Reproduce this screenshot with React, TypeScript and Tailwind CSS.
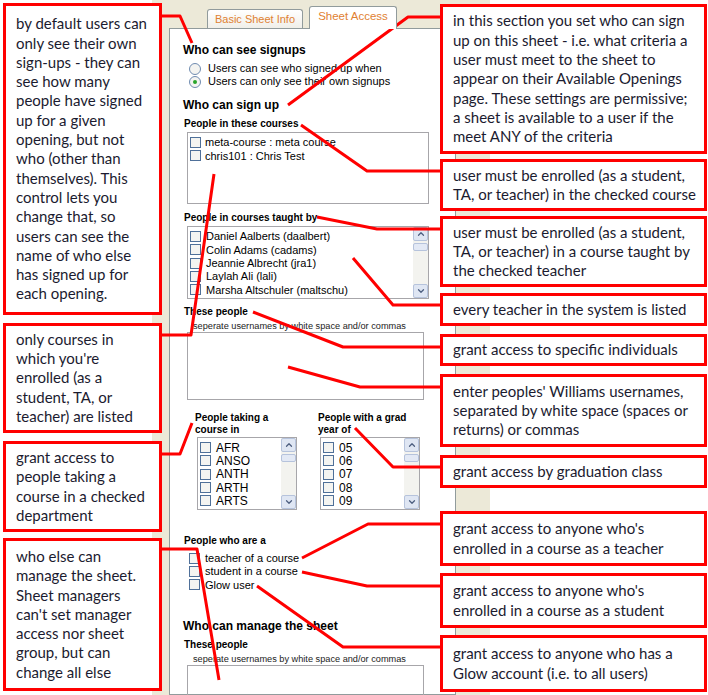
import { ChevronDown, ChevronUp } from "lucide-react";

interface Callout {
  cls: string;
  lines: string[];
}

const leftNotes: Callout[] = [
  {
    cls: "h-[312px]",
    lines: [
      "by default users can",
      "only see their own",
      "sign-ups - they can",
      "see how many",
      "people have signed",
      "up for a given",
      "opening, but not",
      "who (other than",
      "themselves). This",
      "control lets you",
      "change that, so",
      "users can see the",
      "name of who else",
      "has signed up for",
      "each opening.",
    ],
  },
  {
    cls: "mt-[8px] h-[110px]",
    lines: ["only courses in", "which you're", "enrolled (as a", "student, TA, or", "teacher) are listed"],
  },
  {
    cls: "mt-[8px] h-[91px]",
    lines: ["grant access to", "people taking a", "course in a checked", "department"],
  },
  {
    cls: "mt-[6px] h-[153px]",
    lines: [
      "who else can",
      "manage the sheet.",
      "Sheet managers",
      "can't set manager",
      "access nor sheet",
      "group, but can",
      "change all else",
    ],
  },
];

const rightNotes: Callout[] = [
  {
    cls: "h-[150px]",
    lines: [
      "in this section you set who can sign",
      "up on this sheet - i.e. what criteria a",
      "user must meet to the sheet to",
      "appear on their Available Openings",
      "page. These settings are permissive;",
      "a sheet is available to a user if the",
      "meet ANY of the criteria",
    ],
  },
  { cls: "mt-[5px] h-[52px]", lines: ["user must be enrolled (as a student,", "TA, or teacher) in the checked course"] },
  {
    cls: "mt-[5px] h-[71px]",
    lines: ["user must be enrolled (as a student,", "TA, or teacher) in a course taught by", "the checked teacher"],
  },
  { cls: "mt-[6px] h-[33px]", lines: ["every teacher in the system is listed"] },
  { cls: "mt-[8px] h-[32px]", lines: ["grant access to specific individuals"] },
  {
    cls: "mt-[8px] h-[73px]",
    lines: ["enter peoples' Williams usernames,", "separated by white space (spaces or", "returns) or commas"],
  },
  { cls: "mt-[8px] h-[33px]", lines: ["grant access by graduation class"] },
  { cls: "mt-[23px] h-[55px]", lines: ["grant access to anyone who's", "enrolled in a course as a teacher"] },
  { cls: "mt-[7px] h-[55px]", lines: ["grant access to anyone who's", "enrolled in a course as a student"] },
  { cls: "mt-[7px] h-[57px]", lines: ["grant access to anyone who has a", "Glow account (i.e. to all users)"] },
];

// connector lines, in page pixels
const connectors = [
  "162,16 180,16 192,43",
  "440,17 408,17 288,105",
  "440,171 367,171 301,125",
  "440,229 377,229 317,217",
  "440,305 393,305 353,258",
  "440,347 343,347 253,312",
  "440,387 360,387 288,367",
  "440,467 393,467 355,428",
  "440,524 368,524 302,558",
  "440,586 367,586 302,572",
  "440,647 343,647 257,586",
  "162,335 191,335 214,174",
  "162,454 180,454 192,423",
  "162,549 197,549 219,680",
];

const teachers = [
  "Daniel Aalberts (daalbert)",
  "Colin Adams (cadams)",
  "Jeannie Albrecht (jra1)",
  "Laylah Ali (lali)",
  "Marsha Altschuler (maltschu)",
];
const depts = ["AFR", "ANSO", "ANTH", "ARTH", "ARTS"];
const years = ["05", "06", "07", "08", "09"];

function Note({ note }: { note: Callout }) {
  return (
    <div
      className={`${note.cls} flex flex-col justify-center border-[3px] border-[#ff0000] bg-white pl-[10px] text-[15px] leading-[19.3px] text-[#1b1b2f]`}
    >
      {note.lines.map((l, i) => (
        <div key={i} className="whitespace-nowrap">
          {l}
        </div>
      ))}
    </div>
  );
}

function Checkbox() {
  return <span className="block w-[11px] h-[11px] shrink-0 border border-[#4f7099] bg-[#f4f4f1]" />;
}

function Radio({ on }: { on?: boolean }) {
  return (
    <span className="flex items-center justify-center w-[12px] h-[12px] shrink-0 rounded-full border border-[#6f8bb0] bg-[#f4f4f1]">
      {on && <span className="block w-[4px] h-[4px] rounded-full bg-[#2aa52a]" />}
    </span>
  );
}

function Scrollbar({ thumb }: { thumb: string }) {
  return (
    <div className="flex flex-col w-[15px] h-full bg-[#f3f3ef]">
      <div className="flex items-center justify-center h-[14px] rounded-[2px] border border-[#b6c3dc] bg-[#dfe6f3] text-[#4d5f80]">
        <ChevronUp size={10} strokeWidth={3} />
      </div>
      <div className={`${thumb} mt-[2px] rounded-[2px] border border-[#b6c3dc] bg-[#e3e9f5]`} />
      <div className="flex-1" />
      <div className="flex items-center justify-center h-[14px] rounded-[2px] border border-[#b6c3dc] bg-[#dfe6f3] text-[#4d5f80]">
        <ChevronDown size={10} strokeWidth={3} />
      </div>
    </div>
  );
}

function CheckList({ items, cls, textCls }: { items: string[]; cls: string; textCls: string }) {
  return (
    <div className={`${cls} flex overflow-hidden border border-[#a7a6aa] bg-white`}>
      <div className="flex-1 overflow-hidden pt-[3px]">
        {items.map((t) => (
          <div key={t} className="flex items-center h-[13.3px] pl-[2px]">
            <Checkbox />
            <span className={`${textCls} whitespace-nowrap`}>{t}</span>
          </div>
        ))}
        {/* next row, scrolled out of view */}
        <div className="flex items-center h-[13.3px] pl-[2px]">
          <Checkbox />
        </div>
      </div>
      <Scrollbar thumb="h-[8px]" />
    </div>
  );
}

export default function App() {
  return (
    <div
      className="relative w-[708px] h-[695px] overflow-hidden bg-white text-black"
      style={{ fontFamily: '"Liberation Sans", Arial, sans-serif' }}
    >
      {/* screenshot of the form */}
      <div className="ml-[152px] w-[338px] h-full flex flex-col bg-[#ece9d8]">
        {/* tabs */}
        <div className="flex shrink-0 items-end h-[28px] pl-[55px] gap-[6px]">
          <div className="flex items-center justify-center w-[96px] h-[19px] rounded-t-[3px] border border-b-0 border-[#919b9c] bg-gradient-to-b from-white to-[#f0efe9] text-[11px] text-[#df8132]">
            Basic Sheet Info
          </div>
          <div className="relative z-10 -mb-px flex items-center justify-center w-[88px] h-[23px] rounded-t-[3px] border border-b-0 border-[#919b9c] bg-white pb-[2px] text-[11.5px] text-[#df8132]">
            Sheet Access
          </div>
        </div>

        {/* panel */}
        <div className="ml-[17px] w-[287px] flex-1 min-h-0 border border-[#919b9c] bg-white pl-[13px] pt-[14px]">
          <div className="h-[14px] text-[12px] font-bold leading-[14px]">Who can see signups</div>
          <div className="mt-[5px] pl-[6px] text-[11px]">
            <div className="flex items-center gap-[7px] h-[13px]">
              <Radio />
              <span>Users can see who signed up when</span>
            </div>
            <div className="flex items-center gap-[7px] h-[13px]">
              <Radio on />
              <span>Users can only see their own signups</span>
            </div>
          </div>

          <div className="mt-[10px] h-[14px] text-[12px] font-bold leading-[14px]">Who can sign up</div>

          <div className="mt-[6px] h-[12px] pl-[1px] text-[10px] font-bold leading-[12px]">People in these courses</div>
          <div className="mt-[2px] ml-[4px] w-[242px] h-[72px] border border-[#a7a6aa] pt-[3px] text-[11px]">
            <div className="flex items-center gap-[4px] h-[13.3px] pl-[2px]">
              <Checkbox />
              <span>meta-course : meta course</span>
            </div>
            <div className="flex items-center gap-[4px] h-[13.3px] pl-[2px]">
              <Checkbox />
              <span>chris101 : Chris Test</span>
            </div>
          </div>

          <div className="mt-[8px] h-[12px] pl-[1px] text-[10px] font-bold leading-[12px]">People in courses taught by</div>
          <CheckList items={teachers} cls="mt-[2px] ml-[4px] w-[242px] h-[73px]" textCls="ml-[5px] text-[11px]" />

          <div className="mt-[7px] h-[12px] pl-[1px] text-[10px] font-bold leading-[12px]">These people</div>
          <div className="mt-[2px] h-[12px] pl-[10px] text-[9.2px] leading-[12px] text-[#222]">
            seperate usernames by white space and/or commas
          </div>
          <div className="ml-[4px] w-[237px] h-[68px] border border-[#a7a6aa]" />

          <div className="mt-[12px] flex">
            <div className="w-[123px] pl-[12px]">
              <div className="h-[24px] text-[10px] font-bold leading-[12px]">
                People taking a
                <br />
                course in
              </div>
              <CheckList items={depts} cls="mt-[1px] ml-[2px] w-[100px] h-[73px]" textCls="ml-[5px] text-[12px]" />
            </div>
            <div className="pl-[12px]">
              <div className="h-[24px] text-[10px] font-bold leading-[12px]">
                People with a grad
                <br />
                year of
              </div>
              <CheckList items={years} cls="mt-[1px] ml-[2px] w-[100px] h-[73px]" textCls="ml-[5px] text-[12px]" />
            </div>
          </div>

          <div className="mt-[25px] h-[12px] pl-[1px] text-[10px] font-bold leading-[12px]">People who are a</div>
          <div className="mt-[4.5px] pl-[6px] text-[11px]">
            {["teacher of a course", "student in a course", "Glow user"].map((t) => (
              <div key={t} className="flex items-center gap-[5px] h-[13.3px]">
                <Checkbox />
                <span>{t}</span>
              </div>
            ))}
          </div>

          <div className="mt-[28px] h-[14px] text-[12px] font-bold leading-[14px]">Who can manage the sheet</div>
          <div className="mt-[6px] h-[12px] pl-[1px] text-[10px] font-bold leading-[12px]">These people</div>
          <div className="mt-[2px] h-[12px] pl-[10px] text-[9.2px] leading-[12px] text-[#222]">
            seperate usernames by white space and/or commas
          </div>
          <div className="ml-[4px] w-[237px] h-[68px] border border-[#a7a6aa]" />
        </div>
      </div>

      {/* annotation callouts */}
      <div className="absolute left-[3px] top-[3px] w-[159px] flex flex-col" style={{ fontFamily: "Lato, sans-serif" }}>
        {leftNotes.map((n, i) => (
          <Note key={i} note={n} />
        ))}
      </div>
      <div className="absolute left-[440px] top-[4px] w-[267px] flex flex-col" style={{ fontFamily: "Lato, sans-serif" }}>
        {rightNotes.map((n, i) => (
          <Note key={i} note={n} />
        ))}
      </div>

      <svg className="absolute inset-0 pointer-events-none" width={708} height={695} viewBox="0 0 708 695">
        {connectors.map((p, i) => (
          <polyline key={i} points={p} fill="none" stroke="#ff0000" strokeWidth={3} strokeLinejoin="round" />
        ))}
      </svg>
    </div>
  );
}
